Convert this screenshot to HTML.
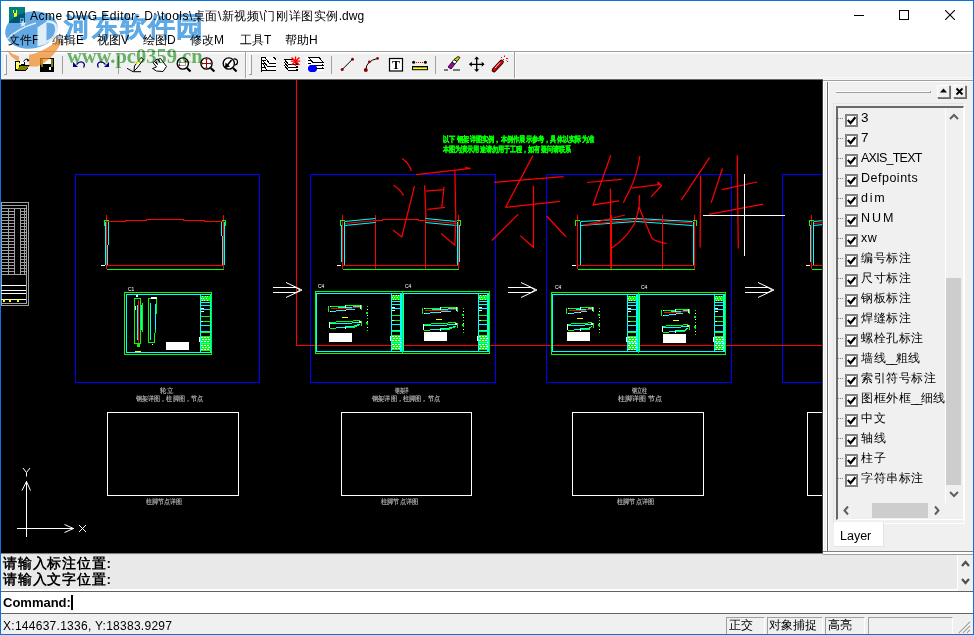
<!DOCTYPE html>
<html><head><meta charset="utf-8">
<style>
*{margin:0;padding:0;box-sizing:border-box}
html,body{width:974px;height:635px;overflow:hidden;background:#f0f0f0;font-family:"Liberation Sans",sans-serif;position:relative}
.a{position:absolute}
#title{left:0;top:0;width:974px;height:51px;background:#fff}
.t{font-size:12px;color:#000;white-space:nowrap;line-height:14px}
.dot{left:838px;width:5px;height:1px;background-image:linear-gradient(90deg,#808080 1px,transparent 1px);background-size:2px 1px}
.cb{left:845px;width:13px;height:13px;border:2px solid #808080;background:#fff}
.li{left:861px;font-size:12px;margin-top:-2px;letter-spacing:0.5px}
.lat{font-size:12.5px;letter-spacing:0}
.btn{width:13px;height:13px;background:#f0f0f0;border:1px solid #fff;border-right-color:#808080;border-bottom-color:#808080;box-shadow:1px 1px 0 #696969}
.cmdt{font-size:13.5px;font-weight:bold;line-height:16px;letter-spacing:0.8px;color:#000;white-space:nowrap}
.sp{top:617px;height:18px;border-top:1px solid #a0a0a0;border-left:1px solid #a0a0a0;border-right:1px solid #fff}
</style></head><body>
<div class="a" id="title"></div>
<!-- title -->
<svg class="a" style="left:9px;top:7px" width="16" height="16" viewBox="0 0 16 16">
<rect x="0" y="0" width="16" height="16" fill="#008080"/>
<path d="M3.4 3 H5.1 L5.3 6.3 H6.7 L6.9 3 H8.6 L7.9 6.3 V9.8 H4.6 V6.3 Z" fill="#ffff00" shape-rendering="crispEdges"/>
<rect x="11.5" y="11.5" width="3" height="3" fill="none" stroke="#fff" stroke-width="1"/>
</svg>
<div class="a t" style="left:30px;top:9px"><span style="letter-spacing:0.52px">Acme DWG Editor- D:\tools\</span><span style="letter-spacing:0.55px">桌面\新视频\门刚详图实例</span>.dwg</div>
<!-- caption buttons -->
<div class="a" style="left:854px;top:15px;width:10px;height:1px;background:#000"></div>
<div class="a" style="left:899px;top:10px;width:10px;height:10px;border:1px solid #000"></div>
<svg class="a" style="left:945px;top:10px" width="10" height="10" viewBox="0 0 10 10"><path d="M0 0 L10 10 M10 0 L0 10" stroke="#000" stroke-width="1.1"/></svg>
<!-- menu -->
<div class="a t" style="left:8px;top:33px">文件F</div>
<div class="a t" style="left:52px;top:33px">编辑E</div>
<div class="a t" style="left:97px;top:33px">视图V</div>
<div class="a t" style="left:143px;top:33px">绘图D</div>
<div class="a t" style="left:190px;top:33px">修改M</div>
<div class="a t" style="left:240px;top:33px">工具T</div>
<div class="a t" style="left:285px;top:33px">帮助H</div>
<!-- menu separator -->
<div class="a" style="left:0;top:51px;width:974px;height:1px;background:#a0a0a0"></div>
<div class="a" style="left:0;top:52px;width:974px;height:1px;background:#fff"></div>
<!-- toolbar bottom -->
<div class="a" style="left:1px;top:77px;width:972px;height:1px;background:#f8f8f8"></div>
<div class="a" style="left:1px;top:79px;width:822px;height:1px;background:#6a6a6a"></div>
<div class="a" style="left:823px;top:79px;width:150px;height:1px;background:#fafafa"></div>
<!-- toolbar -->
<svg class="a" style="left:0;top:52px" width="974" height="26" viewBox="0 52 974 26">
<g shape-rendering="crispEdges">
<rect x="1" y="53" width="972" height="1" fill="#fafafa"/>
<!-- grips -->
<rect x="4" y="55" width="1" height="20" fill="#fff"/><rect x="6" y="55" width="1" height="20" fill="#a0a0a0"/><rect x="4" y="74" width="3" height="1" fill="#a0a0a0"/>
<rect x="249" y="55" width="1" height="20" fill="#fff"/><rect x="251" y="55" width="1" height="20" fill="#a0a0a0"/><rect x="249" y="74" width="3" height="1" fill="#a0a0a0"/>
<!-- separators -->
<rect x="62" y="56" width="1" height="18" fill="#a0a0a0"/>
<rect x="118" y="56" width="1" height="18" fill="#a0a0a0"/>
<rect x="331" y="56" width="1" height="18" fill="#a0a0a0"/>
<rect x="435" y="56" width="1" height="18" fill="#a0a0a0"/>
<!-- toolbar ends -->
<rect x="245" y="52" width="1" height="26" fill="#a0a0a0"/><rect x="246" y="52" width="1" height="26" fill="#fff"/>
<rect x="514" y="52" width="1" height="26" fill="#a0a0a0"/><rect x="515" y="52" width="1" height="26" fill="#fff"/>
<!-- open folder -->
<path d="M15 61 H19 L20 62 H25 V65 H30 L26 71 H15 Z" fill="#000"/>
<rect x="16" y="62" width="3" height="7" fill="#ffff00"/>
<rect x="16" y="62" width="1" height="1" fill="#fff"/><rect x="18" y="62" width="1" height="1" fill="#fff"/><rect x="17" y="63" width="1" height="1" fill="#fff"/><rect x="16" y="64" width="1" height="1" fill="#fff"/><rect x="18" y="64" width="1" height="1" fill="#fff"/><rect x="17" y="65" width="1" height="1" fill="#fff"/><rect x="16" y="66" width="1" height="1" fill="#fff"/><rect x="16" y="68" width="1" height="1" fill="#fff"/>
<path d="M19 63 L23 64 L19 65 Z" fill="#ffff00"/>
<rect x="20" y="62" width="4" height="2" fill="#fff"/>
<path d="M16.5 70 L20 66 H29 L25.5 70 Z" fill="#808000"/>
<!-- save -->
<rect x="40" y="58" width="14" height="14" fill="#000"/>
<rect x="41" y="59" width="2" height="8" fill="#808000"/><rect x="51" y="59" width="2" height="8" fill="#808000"/>
<rect x="43" y="59" width="8" height="5" fill="#fff"/>
<rect x="49" y="67" width="2" height="3" fill="#fff"/>
</g>
<path d="M23.5 61.5 Q25.5 57.5 28.5 59.5" fill="none" stroke="#000" stroke-width="0.9"/><path d="M27.5 58.5 L29.5 61 L27 61.5 Z" fill="#000"/>
<!-- undo / redo -->
<path d="M76.5 64.5 Q80 60.5 83 62.5 Q85.5 64.5 83.5 67.5" fill="none" stroke="#000080" stroke-width="1.3"/>
<path d="M73 62 L73 67 L78 67 Z" fill="#000080"/>
<path d="M105.5 64.5 Q102 60.5 99 62.5 Q96.5 64.5 98.5 67.5" fill="none" stroke="#000080" stroke-width="1.3"/>
<path d="M109 62 L109 67 L104 67 Z" fill="#000080"/>
<!-- pen -->
<path d="M127 68.3 L133 71.7 L141 71.7" fill="none" stroke="#000" stroke-width="1"/>
<path d="M134 71 L134.5 66 L141 57.5 L143.5 59.5 L137 68 Z" fill="#fff" stroke="#000" stroke-width="1"/>
<path d="M136.5 64 L140.5 59" stroke="#ffff00" stroke-width="1.3"/>
<!-- hand -->
<path d="M152.5 68.5 Q155 67.5 156.5 67 L153 62.5 L154.5 61.5 L157.5 64.5 L155.5 60 L157.5 59 L160 62.5 L158.5 59 L160.5 58.5 L166.5 66.5 L163 71.5 L156.5 71 Z" fill="#fff" stroke="#000" stroke-width="1"/>
<!-- zoom window -->
<line x1="187" y1="68" x2="190.5" y2="71.5" stroke="#000" stroke-width="2.2"/>
<circle cx="182.8" cy="63.5" r="5.6" fill="#fff" stroke="#000" stroke-width="1.4"/>
<path d="M179.5 65.5 V62.5 H185.5 V65.5 Z" fill="none" stroke="#808080" stroke-width="0.8"/>
<circle cx="179.3" cy="65.3" r="1" fill="#c00000"/><circle cx="185.6" cy="61.2" r="1" fill="#c00000"/>
<!-- zoom center -->
<line x1="210.7" y1="68" x2="214.4" y2="71.5" stroke="#000" stroke-width="2.2"/>
<circle cx="206.5" cy="63.5" r="5.6" fill="#fff" stroke="#000" stroke-width="1.4"/>
<path d="M206.5 58.7 V68.3 M201.7 63.5 H211.3" stroke="#a00000" stroke-width="1"/>
<path d="M206.5 58.5 l-1.3 1.6h2.6z M206.5 68.5 l-1.3 -1.6h2.6z M201.5 63.5 l1.6 -1.3v2.6z M211.5 63.5 l-1.6 -1.3v2.6z" fill="#a00000"/>
<!-- zoom previous -->
<line x1="233" y1="68" x2="236.6" y2="71.5" stroke="#000" stroke-width="2.2"/>
<circle cx="228.8" cy="63.5" r="5.6" fill="#fff" stroke="#000" stroke-width="1.4"/>
<path d="M225.5 67.5 L231.5 60" stroke="#000" stroke-width="1.6"/>
<path d="M225 68 L225.5 62.5 L230 66.5 Z" fill="#000"/>
<path d="M233.5 59 Q237.5 58.5 237.5 62 Q237.5 64.5 235 65" fill="none" stroke="#000" stroke-width="1.2"/>
<!-- layers 1 -->
<g shape-rendering="crispEdges">
<path d="M262 57 H273 L276 60 V71 H262 Z" fill="#fff"/>
<path d="M305 57 H319 L324 62 V71 H308 Z" fill="#fff"/>
<path d="M284 59 H293 L298 64 V71 H288 L284 67 Z" fill="#fff"/>
</g>
<g fill="none" stroke="#000" stroke-width="1" shape-rendering="crispEdges">
<path d="M261.5 57 V72"/>
<path d="M262 57.5 H265 M262 60.5 H266 M262 63.5 H265 M262 67.5 H265"/>
<path d="M265 57.5 L269.5 63.5 H276 M263 60.5 L267.5 66.5 H276 M263 63.5 L267 70.5 M262 70.5 H276 M273.5 57 L276 59.5"/>
<!-- layers 2 -->
<path d="M284 59.5 H292.5 M284.5 59.5 L288.5 64.5 H298 M284.5 62.5 L288.5 67.5 H298 M284.5 65.5 L288.5 70.5 H298"/>
<path d="M296.5 63 L298 64.5 M296.5 66 L298 67.5 M296.5 69 L298 70.5"/>
<!-- layers 3 -->
<path d="M308 57.5 H319 L323.5 62.5 H313 L308.5 57.5 M308 60.5 H311 M308 63.5 H311 M313 65.5 H323.5 M317 68.5 H323.5 M322 61 L323.5 62.5 M322 64 L323.5 65.5 M322 67 L323.5 68.5"/>
</g>
<path d="M291.5 57.5 L299.5 65 M299.5 57.5 L291.5 65 M295.5 56.5 V66 M290.8 61.2 H300.2" stroke="#ff0000" stroke-width="1.3"/>
<path d="M310 65 H315 L317 67 V70 L315 72 H310 L308 70 V67 Z" fill="#0000ff"/>
<!-- line -->
<line x1="342.2" y1="69.5" x2="352.5" y2="59.2" stroke="#000" stroke-width="1"/>
<circle cx="342.2" cy="69.5" r="1.5" fill="#8b0000"/><circle cx="352.5" cy="59.2" r="1.5" fill="#8b0000"/>
<!-- arc -->
<path d="M365.8 70 Q366 61 377.6 58.4" fill="none" stroke="#000" stroke-width="1"/>
<circle cx="365.8" cy="70" r="2" fill="#8b0000"/><circle cx="369.4" cy="61.8" r="1.4" fill="#8b0000"/><circle cx="377.6" cy="58.4" r="1.3" fill="#8b0000"/>
<!-- T -->
<rect x="389.5" y="58.5" width="13" height="12.5" fill="#fff" stroke="#000" stroke-width="1.2"/>
<text x="396" y="69" text-anchor="middle" font-family="Liberation Serif" font-weight="bold" font-size="12" fill="#000">T</text>
<!-- dim -->
<circle cx="413.6" cy="62.3" r="1.5" fill="#000"/><circle cx="425.4" cy="62.3" r="1.5" fill="#000"/>
<path d="M416 62.5 H424" stroke="#d00000" stroke-width="1" stroke-dasharray="1 1" shape-rendering="crispEdges"/>
<rect x="412.5" y="66.5" width="15" height="3.2" fill="#ffff00" stroke="#000" stroke-width="1"/><path d="M414 67 V68 M416 67 V67.8 M418 67 V68 M420 67 V67.8 M422 67 V68 M424 67 V67.8 M426 67 V68" stroke="#000" stroke-width="0.8"/>
<!-- eraser -->
<path d="M444 70 H448 M453 70 H460" stroke="#000" stroke-width="1.2"/>
<path d="M448 67 L451 69 L455 64 L452 62 Z" fill="#a000a0" stroke="#000" stroke-width="0.8"/>
<path d="M452 62 L455 64 L457 61.5 L454 59.5 Z" fill="#fff" stroke="#000" stroke-width="0.8"/>
<path d="M454 59.5 L457 61.5 L460 57.5 L458 56.5 Z" fill="#c8c800" stroke="#000" stroke-width="0.8"/>
<!-- move -->
<path d="M476.7 57.5 V71 M469.5 64.3 H484" stroke="#000" stroke-width="1.3"/>
<path d="M476.7 56.5 l-2.5 2.8h5z M476.7 72 l-2.5 -2.8h5z M469 64.3 l2.8 -2.5v5z M484.5 64.3 l-2.8 -2.5v5z" fill="#000"/>
<!-- explode -->
<path d="M494 70 L501.5 62" stroke="#000" stroke-width="4.6" stroke-linecap="round"/>
<path d="M494 70 L501.5 62" stroke="#e00000" stroke-width="3" stroke-linecap="round"/>
<path d="M495 68 L500 62.5" stroke="#fff" stroke-width="0.8"/>
<path d="M502 61 L504 59 M504.5 57 V55.5 M506 58.5 H508 M506.5 60.5 L508 62 M501 57 L502 58" stroke="#c00000" stroke-width="0.9"/>
</svg>
<!-- canvas -->
<div class="a" style="left:1px;top:80px;width:822px;height:473px;background:#000"></div>
<svg class="a" style="left:1px;top:80px" width="822" height="473" viewBox="1 80 822 473">
<g shape-rendering="crispEdges">
<rect x="1.5" y="202.5" width="27.0" height="103.0" fill="none" stroke="#a0a0a0" stroke-width="1"/>
<rect x="1.5" y="205.5" width="25.0" height="98.0" fill="none" stroke="#a0a0a0" stroke-width="1"/>
<line x1="1" y1="208.5" x2="26" y2="208.5" stroke="#a0a0a0" stroke-width="1"/>
<line x1="1" y1="211.5" x2="15" y2="211.5" stroke="#a0a0a0" stroke-width="1"/>
<line x1="21" y1="211.5" x2="26" y2="211.5" stroke="#a0a0a0" stroke-width="1"/>
<line x1="1" y1="214.5" x2="15" y2="214.5" stroke="#a0a0a0" stroke-width="1"/>
<line x1="21" y1="214.5" x2="26" y2="214.5" stroke="#a0a0a0" stroke-width="1"/>
<line x1="1" y1="217.5" x2="15" y2="217.5" stroke="#a0a0a0" stroke-width="1"/>
<line x1="21" y1="217.5" x2="26" y2="217.5" stroke="#a0a0a0" stroke-width="1"/>
<line x1="1" y1="220.5" x2="15" y2="220.5" stroke="#a0a0a0" stroke-width="1"/>
<line x1="21" y1="220.5" x2="26" y2="220.5" stroke="#a0a0a0" stroke-width="1"/>
<line x1="1" y1="223.5" x2="15" y2="223.5" stroke="#a0a0a0" stroke-width="1"/>
<line x1="21" y1="223.5" x2="26" y2="223.5" stroke="#a0a0a0" stroke-width="1"/>
<line x1="1" y1="226.5" x2="15" y2="226.5" stroke="#a0a0a0" stroke-width="1"/>
<line x1="21" y1="226.5" x2="26" y2="226.5" stroke="#a0a0a0" stroke-width="1"/>
<line x1="1" y1="229.5" x2="15" y2="229.5" stroke="#a0a0a0" stroke-width="1"/>
<line x1="21" y1="229.5" x2="26" y2="229.5" stroke="#a0a0a0" stroke-width="1"/>
<line x1="1" y1="232.5" x2="15" y2="232.5" stroke="#a0a0a0" stroke-width="1"/>
<line x1="21" y1="232.5" x2="26" y2="232.5" stroke="#a0a0a0" stroke-width="1"/>
<line x1="1" y1="235.5" x2="15" y2="235.5" stroke="#a0a0a0" stroke-width="1"/>
<line x1="21" y1="235.5" x2="26" y2="235.5" stroke="#a0a0a0" stroke-width="1"/>
<line x1="1" y1="238.5" x2="15" y2="238.5" stroke="#a0a0a0" stroke-width="1"/>
<line x1="21" y1="238.5" x2="26" y2="238.5" stroke="#a0a0a0" stroke-width="1"/>
<line x1="1" y1="241.5" x2="15" y2="241.5" stroke="#a0a0a0" stroke-width="1"/>
<line x1="21" y1="241.5" x2="26" y2="241.5" stroke="#a0a0a0" stroke-width="1"/>
<line x1="1" y1="244.5" x2="15" y2="244.5" stroke="#a0a0a0" stroke-width="1"/>
<line x1="21" y1="244.5" x2="26" y2="244.5" stroke="#a0a0a0" stroke-width="1"/>
<line x1="1" y1="247.5" x2="15" y2="247.5" stroke="#a0a0a0" stroke-width="1"/>
<line x1="21" y1="247.5" x2="26" y2="247.5" stroke="#a0a0a0" stroke-width="1"/>
<line x1="1" y1="250.5" x2="15" y2="250.5" stroke="#a0a0a0" stroke-width="1"/>
<line x1="21" y1="250.5" x2="26" y2="250.5" stroke="#a0a0a0" stroke-width="1"/>
<line x1="1" y1="253.5" x2="15" y2="253.5" stroke="#a0a0a0" stroke-width="1"/>
<line x1="21" y1="253.5" x2="26" y2="253.5" stroke="#a0a0a0" stroke-width="1"/>
<line x1="1" y1="256.5" x2="15" y2="256.5" stroke="#a0a0a0" stroke-width="1"/>
<line x1="21" y1="256.5" x2="26" y2="256.5" stroke="#a0a0a0" stroke-width="1"/>
<line x1="1" y1="259.5" x2="15" y2="259.5" stroke="#a0a0a0" stroke-width="1"/>
<line x1="21" y1="259.5" x2="26" y2="259.5" stroke="#a0a0a0" stroke-width="1"/>
<line x1="1" y1="262.5" x2="15" y2="262.5" stroke="#a0a0a0" stroke-width="1"/>
<line x1="21" y1="262.5" x2="26" y2="262.5" stroke="#a0a0a0" stroke-width="1"/>
<line x1="1" y1="265.5" x2="15" y2="265.5" stroke="#a0a0a0" stroke-width="1"/>
<line x1="21" y1="265.5" x2="26" y2="265.5" stroke="#a0a0a0" stroke-width="1"/>
<line x1="1" y1="268.5" x2="15" y2="268.5" stroke="#a0a0a0" stroke-width="1"/>
<line x1="21" y1="268.5" x2="26" y2="268.5" stroke="#a0a0a0" stroke-width="1"/>
<line x1="1" y1="271.5" x2="15" y2="271.5" stroke="#a0a0a0" stroke-width="1"/>
<line x1="21" y1="271.5" x2="26" y2="271.5" stroke="#a0a0a0" stroke-width="1"/>
<line x1="1" y1="274.5" x2="15" y2="274.5" stroke="#a0a0a0" stroke-width="1"/>
<line x1="21" y1="274.5" x2="26" y2="274.5" stroke="#a0a0a0" stroke-width="1"/>
<line x1="8.5" y1="208" x2="8.5" y2="274" stroke="#a0a0a0" stroke-width="1"/>
<line x1="14.5" y1="208" x2="14.5" y2="274" stroke="#a0a0a0" stroke-width="1"/>
<line x1="20.5" y1="208" x2="20.5" y2="274" stroke="#a0a0a0" stroke-width="1"/>
<line x1="24.5" y1="208" x2="24.5" y2="274" stroke="#a0a0a0" stroke-width="1"/>
<line x1="1" y1="274.5" x2="26" y2="274.5" stroke="#a0a0a0" stroke-width="1"/>
<line x1="1" y1="285.5" x2="26" y2="285.5" stroke="#ffffff" stroke-width="1"/>
<line x1="1" y1="290.5" x2="26" y2="290.5" stroke="#ffffff" stroke-width="1"/>
<line x1="1" y1="293.5" x2="26" y2="293.5" stroke="#ffffff" stroke-width="1"/>
<line x1="1" y1="299.5" x2="26" y2="299.5" stroke="#ffffff" stroke-width="1"/>
<rect x="3" y="299" width="2" height="3" fill="#ffff00"/>
<rect x="9" y="299" width="2" height="3" fill="#ffff00"/>
<rect x="17" y="299" width="2" height="3" fill="#ffff00"/>
<rect x="75.5" y="174.5" width="184.0" height="208.0" fill="none" stroke="#0000ff" stroke-width="1"/>
<rect x="310.5" y="174.5" width="185.0" height="208.0" fill="none" stroke="#0000ff" stroke-width="1"/>
<rect x="546.5" y="174.5" width="185.0" height="208.0" fill="none" stroke="#0000ff" stroke-width="1"/>
<rect x="782.5" y="174.5" width="47.5" height="208.0" fill="none" stroke="#0000ff" stroke-width="1"/>
<rect x="107.5" y="412.5" width="131.0" height="83.0" fill="none" stroke="#ffffff" stroke-width="1"/>
<rect x="341.5" y="412.5" width="130.0" height="83.0" fill="none" stroke="#ffffff" stroke-width="1"/>
<rect x="572.5" y="412.5" width="131.0" height="83.0" fill="none" stroke="#ffffff" stroke-width="1"/>
<rect x="807.5" y="412.5" width="22.5" height="83.0" fill="none" stroke="#ffffff" stroke-width="1"/>
<line x1="106.5" y1="215" x2="106.5" y2="269" stroke="#ff0000" stroke-width="1"/>
<line x1="223.5" y1="215" x2="223.5" y2="269" stroke="#ff0000" stroke-width="1"/>
<line x1="106.5" y1="265.5" x2="223.5" y2="265.5" stroke="#ff0000" stroke-width="1"/>
<line x1="106.5" y1="269.5" x2="223.5" y2="269.5" stroke="#00ff00" stroke-width="1"/>
<line x1="100.5" y1="265.5" x2="104.5" y2="265.5" stroke="#ffffff" stroke-width="1"/>
<path d="M104.5 226 V220 H108.5" fill="none" stroke="#00ff00" stroke-width="1"/>
<path d="M225.5 226 V220 H221.5" fill="none" stroke="#00ff00" stroke-width="1"/>
<path d="M106.5 221.5 H125.5 V220.5 H146.5 V219.5 H183.5 V220.5 H204.5 V221.5 H223.5" fill="none" stroke="#ff0000" stroke-width="1"/>
<line x1="105.5" y1="222" x2="105.5" y2="265" stroke="#00ffff" stroke-width="1"/>
<line x1="108.5" y1="222" x2="108.5" y2="245" stroke="#00ffff" stroke-width="1"/>
<line x1="107.5" y1="245" x2="107.5" y2="265" stroke="#00ffff" stroke-width="1"/>
<line x1="224.5" y1="222" x2="224.5" y2="265" stroke="#00ffff" stroke-width="1"/>
<line x1="221.5" y1="222" x2="221.5" y2="236" stroke="#00ffff" stroke-width="1"/>
<line x1="222.5" y1="236" x2="222.5" y2="265" stroke="#00ffff" stroke-width="1"/>
<line x1="342.5" y1="215" x2="342.5" y2="269" stroke="#ff0000" stroke-width="1"/>
<line x1="458.5" y1="215" x2="458.5" y2="269" stroke="#ff0000" stroke-width="1"/>
<line x1="342.5" y1="265.5" x2="458.5" y2="265.5" stroke="#ff0000" stroke-width="1"/>
<line x1="342.5" y1="269.5" x2="458.5" y2="269.5" stroke="#00ff00" stroke-width="1"/>
<line x1="336.5" y1="265.5" x2="340.5" y2="265.5" stroke="#ffffff" stroke-width="1"/>
<path d="M340.5 226 V220 H344.5" fill="none" stroke="#00ff00" stroke-width="1"/>
<path d="M460.5 226 V220 H456.5" fill="none" stroke="#00ff00" stroke-width="1"/>
<line x1="375.5" y1="215" x2="375.5" y2="269" stroke="#ff0000" stroke-width="1"/>
<line x1="425.5" y1="215" x2="425.5" y2="269" stroke="#ff0000" stroke-width="1"/>
<path d="M375.5 220.5 H382.5 V219.5 H418.5 V220.5 H425.5" fill="none" stroke="#ff0000" stroke-width="1"/>
</g>
<path d="M344.5 221.5 L375.5 218.5" fill="none" stroke="#00ffff" stroke-width="1"/>
<path d="M344.5 225.5 L375.5 222.5" fill="none" stroke="#00ffff" stroke-width="1"/>
<path d="M344.5 223.5 L375.5 220.5" fill="none" stroke="#ff0000" stroke-width="1"/>
<path d="M456.5 221.5 L425.5 218.5" fill="none" stroke="#00ffff" stroke-width="1"/>
<path d="M456.5 225.5 L425.5 222.5" fill="none" stroke="#00ffff" stroke-width="1"/>
<path d="M456.5 223.5 L425.5 220.5" fill="none" stroke="#ff0000" stroke-width="1"/>
<g shape-rendering="crispEdges">
<line x1="344.0" y1="222" x2="344.0" y2="265" stroke="#00ffff" stroke-width="1"/>
<line x1="341.5" y1="225" x2="341.5" y2="262" stroke="#00ffff" stroke-width="1"/>
<line x1="457.0" y1="222" x2="457.0" y2="265" stroke="#00ffff" stroke-width="1"/>
<line x1="459.5" y1="225" x2="459.5" y2="262" stroke="#00ffff" stroke-width="1"/>
<line x1="577.5" y1="215" x2="577.5" y2="269" stroke="#ff0000" stroke-width="1"/>
<line x1="694.5" y1="215" x2="694.5" y2="269" stroke="#ff0000" stroke-width="1"/>
<line x1="577.5" y1="265.5" x2="694.5" y2="265.5" stroke="#ff0000" stroke-width="1"/>
<line x1="577.5" y1="269.5" x2="694.5" y2="269.5" stroke="#00ff00" stroke-width="1"/>
<line x1="571.5" y1="265.5" x2="575.5" y2="265.5" stroke="#ffffff" stroke-width="1"/>
<path d="M575.5 226 V220 H579.5" fill="none" stroke="#00ff00" stroke-width="1"/>
<path d="M696.5 226 V220 H692.5" fill="none" stroke="#00ff00" stroke-width="1"/>
</g>
<path d="M580.5 221.5 L636.0 218.5 L692.5 221.5" fill="none" stroke="#00ffff" stroke-width="1"/>
<path d="M580.5 225.5 L636.0 221.5 L692.5 225.5" fill="none" stroke="#00ffff" stroke-width="1"/>
<path d="M583.5 225 L636.0 219.5 L692.5 223" fill="none" stroke="#ff0000" stroke-width="1"/>
<g shape-rendering="crispEdges">
<line x1="611.5" y1="215" x2="611.5" y2="269" stroke="#ff0000" stroke-width="1"/>
<line x1="662.0" y1="215" x2="662.0" y2="269" stroke="#ff0000" stroke-width="1"/>
<line x1="580.0" y1="222" x2="580.0" y2="265" stroke="#00ffff" stroke-width="1"/>
<line x1="693.0" y1="222" x2="693.0" y2="265" stroke="#00ffff" stroke-width="1"/>
<line x1="811.5" y1="215" x2="811.5" y2="269" stroke="#ff0000" stroke-width="1"/>
<line x1="928.5" y1="215" x2="928.5" y2="269" stroke="#ff0000" stroke-width="1"/>
<line x1="811.5" y1="265.5" x2="928.5" y2="265.5" stroke="#ff0000" stroke-width="1"/>
<line x1="811.5" y1="269.5" x2="928.5" y2="269.5" stroke="#00ff00" stroke-width="1"/>
<line x1="805.5" y1="265.5" x2="809.5" y2="265.5" stroke="#ffffff" stroke-width="1"/>
<path d="M809.5 226 V220 H813.5" fill="none" stroke="#00ff00" stroke-width="1"/>
<path d="M930.5 226 V220 H926.5" fill="none" stroke="#00ff00" stroke-width="1"/>
<line x1="844.5" y1="215" x2="844.5" y2="269" stroke="#ff0000" stroke-width="1"/>
<line x1="895.5" y1="215" x2="895.5" y2="269" stroke="#ff0000" stroke-width="1"/>
<path d="M844.5 220.5 H851.5 V219.5 H888.5 V220.5 H895.5" fill="none" stroke="#ff0000" stroke-width="1"/>
</g>
<path d="M813.5 221.5 L844.5 218.5" fill="none" stroke="#00ffff" stroke-width="1"/>
<path d="M813.5 225.5 L844.5 222.5" fill="none" stroke="#00ffff" stroke-width="1"/>
<path d="M813.5 223.5 L844.5 220.5" fill="none" stroke="#ff0000" stroke-width="1"/>
<path d="M926.5 221.5 L895.5 218.5" fill="none" stroke="#00ffff" stroke-width="1"/>
<path d="M926.5 225.5 L895.5 222.5" fill="none" stroke="#00ffff" stroke-width="1"/>
<path d="M926.5 223.5 L895.5 220.5" fill="none" stroke="#ff0000" stroke-width="1"/>
<g shape-rendering="crispEdges">
<line x1="813.0" y1="222" x2="813.0" y2="265" stroke="#00ffff" stroke-width="1"/>
<line x1="810.5" y1="225" x2="810.5" y2="262" stroke="#00ffff" stroke-width="1"/>
<line x1="927.0" y1="222" x2="927.0" y2="265" stroke="#00ffff" stroke-width="1"/>
<line x1="929.5" y1="225" x2="929.5" y2="262" stroke="#00ffff" stroke-width="1"/>
</g>
<g shape-rendering="crispEdges">
<line x1="296.5" y1="80" x2="296.5" y2="345.5" stroke="#ff0000" stroke-width="1"/>
<line x1="296" y1="345.5" x2="823" y2="345.5" stroke="#ff0000" stroke-width="1"/>
</g>
<g shape-rendering="crispEdges">
<rect x="124.5" y="292.5" width="87.0" height="62.0" fill="none" stroke="#00ff00" stroke-width="1"/>
<rect x="126.5" y="294.5" width="84.0" height="58.0" fill="none" stroke="#00ffff" stroke-width="1"/>
<rect x="166" y="342" width="23" height="8" fill="#ffffff"/>
<rect x="135" y="351" width="6" height="1" fill="#ffff00"/>
<line x1="200.5" y1="295" x2="200.5" y2="352" stroke="#00ffff" stroke-width="1"/>
<rect x="134.5" y="298.5" width="6.0" height="45.0" fill="none" stroke="#00ff00" stroke-width="1"/>
<line x1="138.5" y1="300" x2="138.5" y2="343" stroke="#ff0000" stroke-width="1"/>
<line x1="137.5" y1="305" x2="137.5" y2="340" stroke="#00ffff" stroke-width="1"/>
<line x1="141.5" y1="305" x2="141.5" y2="330" stroke="#00ffff" stroke-width="1"/>
<line x1="142.5" y1="303" x2="142.5" y2="332" stroke="#00ff00" stroke-width="1"/>
<rect x="136" y="295" width="2" height="2" fill="#ffffff"/>
<rect x="137" y="343" width="3" height="4" fill="#00ff00"/>
<rect x="135" y="306" width="1" height="4" fill="#ffffff"/>
<path d="M148.5 342.5 V298.5 H156.5 V304 L154.5 342.5 Z" fill="none" stroke="#00ff00" stroke-width="1"/>
<line x1="150.5" y1="303" x2="150.5" y2="340" stroke="#00ffff" stroke-width="1"/>
<line x1="155.5" y1="304" x2="155.5" y2="330" stroke="#00ffff" stroke-width="1"/>
<rect x="151" y="297" width="6" height="2" fill="#ffffff"/>
<rect x="152" y="344" width="1" height="1" fill="#ffffff"/>
</g>
<g shape-rendering="crispEdges">
<line x1="200.5" y1="295" x2="200.5" y2="352" stroke="#00ffff" stroke-width="1"/>
<line x1="210.5" y1="295" x2="210.5" y2="352" stroke="#00ffff" stroke-width="1"/>
<rect x="201" y="296" width="9" height="5" fill="#00ff00"/>
<rect x="202" y="296" width="1" height="1" fill="#ffffff"/>
<rect x="205" y="296" width="1" height="1" fill="#ffffff"/>
<rect x="207" y="296" width="1" height="1" fill="#ffffff"/>
<rect x="201" y="298" width="1" height="1" fill="#ffffff"/>
<rect x="203" y="298" width="1" height="1" fill="#ffffff"/>
<rect x="206" y="298" width="1" height="1" fill="#ffffff"/>
<rect x="202" y="300" width="1" height="1" fill="#ffffff"/>
<rect x="204" y="300" width="1" height="1" fill="#ffffff"/>
<rect x="207" y="300" width="1" height="1" fill="#ffffff"/>
<line x1="200" y1="302.5" x2="210" y2="302.5" stroke="#00ffff" stroke-width="1"/>
<line x1="200" y1="305.5" x2="210" y2="305.5" stroke="#00ffff" stroke-width="1"/>
<line x1="200" y1="309.5" x2="210" y2="309.5" stroke="#00ffff" stroke-width="1"/>
<line x1="200" y1="316.5" x2="210" y2="316.5" stroke="#00ffff" stroke-width="1"/>
<line x1="200" y1="321.5" x2="210" y2="321.5" stroke="#00ffff" stroke-width="1"/>
<line x1="200" y1="325.5" x2="210" y2="325.5" stroke="#00ffff" stroke-width="1"/>
<line x1="200" y1="331.5" x2="210" y2="331.5" stroke="#00ffff" stroke-width="1"/>
<line x1="201" y1="316.5" x2="210" y2="316.5" stroke="#00ff00" stroke-width="1"/>
<line x1="201" y1="321.5" x2="210" y2="321.5" stroke="#00ff00" stroke-width="1"/>
<line x1="201" y1="332.5" x2="210" y2="332.5" stroke="#00ff00" stroke-width="1"/>
<rect x="201" y="308" width="3" height="1" fill="#ffffff"/>
<rect x="201" y="311" width="3" height="1" fill="#ffffff"/>
<rect x="201" y="321" width="2" height="1" fill="#ffffff"/>
<rect x="201" y="336" width="9" height="15" fill="#00ff00"/>
<rect x="201" y="337" width="2" height="1" fill="#ffffff"/>
<rect x="204" y="337" width="2" height="1" fill="#ffffff"/>
<rect x="207" y="337" width="2" height="1" fill="#ffffff"/>
<rect x="202" y="339" width="2" height="1" fill="#ffffff"/>
<rect x="205" y="339" width="2" height="1" fill="#ffffff"/>
<rect x="208" y="339" width="2" height="1" fill="#ffffff"/>
<rect x="201" y="341" width="2" height="1" fill="#ffffff"/>
<rect x="204" y="341" width="2" height="1" fill="#ffffff"/>
<rect x="207" y="341" width="2" height="1" fill="#ffffff"/>
<rect x="202" y="343" width="2" height="1" fill="#ffffff"/>
<rect x="205" y="343" width="2" height="1" fill="#ffffff"/>
<rect x="208" y="343" width="2" height="1" fill="#ffffff"/>
<rect x="201" y="345" width="2" height="1" fill="#ffffff"/>
<rect x="204" y="345" width="2" height="1" fill="#ffffff"/>
<rect x="207" y="345" width="2" height="1" fill="#ffffff"/>
<rect x="202" y="347" width="2" height="1" fill="#ffffff"/>
<rect x="205" y="347" width="2" height="1" fill="#ffffff"/>
<rect x="208" y="347" width="2" height="1" fill="#ffffff"/>
<rect x="201" y="349" width="2" height="1" fill="#ffffff"/>
<rect x="204" y="349" width="2" height="1" fill="#ffffff"/>
<rect x="207" y="349" width="2" height="1" fill="#ffffff"/>
<rect x="199" y="337" width="2" height="5" fill="#ffffff"/>
<line x1="200.5" y1="336" x2="200.5" y2="352" stroke="#00ffff" stroke-width="1"/>
<line x1="201" y1="343.5" x2="210" y2="343.5" stroke="#00ffff" stroke-width="1"/>
</g>
<text x="128" y="291" fill="#fff" font-size="5" font-family="Liberation Sans">C1</text>
<g shape-rendering="crispEdges">
<rect x="315.5" y="291.5" width="174.0" height="62.0" fill="none" stroke="#00ff00" stroke-width="1"/>
<line x1="402.5" y1="292" x2="402.5" y2="353" stroke="#00ff00" stroke-width="1"/>
</g>
<g shape-rendering="crispEdges">
<rect x="316.5" y="293.5" width="85.0" height="58.0" fill="none" stroke="#00ffff" stroke-width="1"/>
</g>
<g shape-rendering="crispEdges">
<line x1="391.5" y1="294" x2="391.5" y2="351" stroke="#00ffff" stroke-width="1"/>
<line x1="400.5" y1="294" x2="400.5" y2="351" stroke="#00ffff" stroke-width="1"/>
<rect x="392" y="295" width="8" height="5" fill="#00ff00"/>
<rect x="393" y="295" width="1" height="1" fill="#ffffff"/>
<rect x="396" y="295" width="1" height="1" fill="#ffffff"/>
<rect x="398" y="295" width="1" height="1" fill="#ffffff"/>
<rect x="392" y="297" width="1" height="1" fill="#ffffff"/>
<rect x="394" y="297" width="1" height="1" fill="#ffffff"/>
<rect x="397" y="297" width="1" height="1" fill="#ffffff"/>
<rect x="393" y="299" width="1" height="1" fill="#ffffff"/>
<rect x="395" y="299" width="1" height="1" fill="#ffffff"/>
<rect x="398" y="299" width="1" height="1" fill="#ffffff"/>
<line x1="391" y1="301.5" x2="400" y2="301.5" stroke="#00ffff" stroke-width="1"/>
<line x1="391" y1="304.5" x2="400" y2="304.5" stroke="#00ffff" stroke-width="1"/>
<line x1="391" y1="308.5" x2="400" y2="308.5" stroke="#00ffff" stroke-width="1"/>
<line x1="391" y1="315.5" x2="400" y2="315.5" stroke="#00ffff" stroke-width="1"/>
<line x1="391" y1="320.5" x2="400" y2="320.5" stroke="#00ffff" stroke-width="1"/>
<line x1="391" y1="324.5" x2="400" y2="324.5" stroke="#00ffff" stroke-width="1"/>
<line x1="391" y1="330.5" x2="400" y2="330.5" stroke="#00ffff" stroke-width="1"/>
<line x1="392" y1="315.5" x2="400" y2="315.5" stroke="#00ff00" stroke-width="1"/>
<line x1="392" y1="320.5" x2="400" y2="320.5" stroke="#00ff00" stroke-width="1"/>
<line x1="392" y1="331.5" x2="400" y2="331.5" stroke="#00ff00" stroke-width="1"/>
<rect x="392" y="307" width="3" height="1" fill="#ffffff"/>
<rect x="392" y="310" width="3" height="1" fill="#ffffff"/>
<rect x="392" y="320" width="2" height="1" fill="#ffffff"/>
<rect x="392" y="335" width="8" height="15" fill="#00ff00"/>
<rect x="392" y="336" width="2" height="1" fill="#ffffff"/>
<rect x="395" y="336" width="2" height="1" fill="#ffffff"/>
<rect x="398" y="336" width="2" height="1" fill="#ffffff"/>
<rect x="393" y="338" width="2" height="1" fill="#ffffff"/>
<rect x="396" y="338" width="2" height="1" fill="#ffffff"/>
<rect x="399" y="338" width="2" height="1" fill="#ffffff"/>
<rect x="392" y="340" width="2" height="1" fill="#ffffff"/>
<rect x="395" y="340" width="2" height="1" fill="#ffffff"/>
<rect x="398" y="340" width="2" height="1" fill="#ffffff"/>
<rect x="393" y="342" width="2" height="1" fill="#ffffff"/>
<rect x="396" y="342" width="2" height="1" fill="#ffffff"/>
<rect x="399" y="342" width="2" height="1" fill="#ffffff"/>
<rect x="392" y="344" width="2" height="1" fill="#ffffff"/>
<rect x="395" y="344" width="2" height="1" fill="#ffffff"/>
<rect x="398" y="344" width="2" height="1" fill="#ffffff"/>
<rect x="393" y="346" width="2" height="1" fill="#ffffff"/>
<rect x="396" y="346" width="2" height="1" fill="#ffffff"/>
<rect x="399" y="346" width="2" height="1" fill="#ffffff"/>
<rect x="392" y="348" width="2" height="1" fill="#ffffff"/>
<rect x="395" y="348" width="2" height="1" fill="#ffffff"/>
<rect x="398" y="348" width="2" height="1" fill="#ffffff"/>
<rect x="390" y="336" width="2" height="5" fill="#ffffff"/>
<line x1="391.5" y1="335" x2="391.5" y2="351" stroke="#00ffff" stroke-width="1"/>
<line x1="392" y1="342.5" x2="400" y2="342.5" stroke="#00ffff" stroke-width="1"/>
</g>
<g shape-rendering="crispEdges">
<line x1="330" y1="306.5" x2="344.5" y2="306.5" stroke="#00ff00" stroke-width="1"/>
<line x1="344.5" y1="305.5" x2="361" y2="305.5" stroke="#00ff00" stroke-width="1"/>
<line x1="338" y1="307.5" x2="352.5" y2="307.5" stroke="#00ffff" stroke-width="1"/>
<line x1="352.5" y1="306.5" x2="360" y2="306.5" stroke="#00ffff" stroke-width="1"/>
<line x1="331" y1="308.5" x2="344.5" y2="308.5" stroke="#ff0000" stroke-width="1"/>
<line x1="344.5" y1="308.5" x2="360" y2="307.5" stroke="#ff0000" stroke-width="1"/>
<line x1="345.5" y1="309.5" x2="355" y2="309.5" stroke="#00ffff" stroke-width="1"/>
<line x1="336" y1="310.5" x2="344.5" y2="310.5" stroke="#00ffff" stroke-width="1"/>
<line x1="331" y1="311.5" x2="336" y2="311.5" stroke="#00ffff" stroke-width="1"/>
<line x1="328.5" y1="306" x2="328.5" y2="312" stroke="#00ff00" stroke-width="1"/>
<line x1="361.5" y1="305" x2="361.5" y2="310" stroke="#00ff00" stroke-width="1"/>
<rect x="330" y="306" width="1" height="1" fill="#ffffff"/>
<rect x="344.5" y="305" width="1.0" height="3" fill="#ffffff"/>
<rect x="360" y="305" width="1" height="4" fill="#ffffff"/>
<rect x="330" y="311" width="1" height="1" fill="#ffffff"/>
<rect x="344.5" y="310" width="1.0" height="1" fill="#ffffff"/>
</g>
<g shape-rendering="crispEdges">
<line x1="335.5" y1="321.5" x2="352.5" y2="321.5" stroke="#00ff00" stroke-width="1"/>
<line x1="352.5" y1="320.5" x2="360" y2="320.5" stroke="#00ff00" stroke-width="1"/>
<line x1="330" y1="322.5" x2="335.5" y2="322.5" stroke="#00ff00" stroke-width="1"/>
<line x1="330" y1="323.5" x2="344.5" y2="323.5" stroke="#00ffff" stroke-width="1"/>
<line x1="344.5" y1="323.5" x2="359" y2="322.5" stroke="#00ffff" stroke-width="1"/>
<line x1="354.5" y1="325.5" x2="360" y2="324.5" stroke="#00ffff" stroke-width="1"/>
<line x1="344.5" y1="326.5" x2="354.5" y2="326.5" stroke="#00ffff" stroke-width="1"/>
<line x1="336" y1="327.5" x2="344.5" y2="327.5" stroke="#00ffff" stroke-width="1"/>
<line x1="354.5" y1="326.5" x2="359" y2="325.5" stroke="#00ff00" stroke-width="1"/>
<line x1="344.5" y1="327.5" x2="354.5" y2="327.5" stroke="#00ff00" stroke-width="1"/>
<line x1="330" y1="328.5" x2="336" y2="328.5" stroke="#00ff00" stroke-width="1"/>
<line x1="329.5" y1="322" x2="329.5" y2="328" stroke="#ffffff" stroke-width="1"/>
<line x1="361.5" y1="321" x2="361.5" y2="326" stroke="#00ff00" stroke-width="1"/>
<rect x="359" y="321" width="2" height="2" fill="#ffffff"/>
<rect x="344.5" y="327" width="1.0" height="2" fill="#ffffff"/>
</g>
<g shape-rendering="crispEdges">
<rect x="342" y="317" width="6" height="1" fill="#ffff00"/>
<rect x="329" y="333" width="23" height="9" fill="#ffffff"/>
<rect x="367" y="306" width="1" height="1" fill="#00ff00"/>
<rect x="367" y="309" width="1" height="1" fill="#ffffff"/>
<rect x="367" y="312" width="1" height="1" fill="#00ff00"/>
<rect x="367" y="315" width="1" height="1" fill="#ffffff"/>
<rect x="367" y="318" width="1" height="1" fill="#00ff00"/>
<rect x="367" y="321" width="1" height="1" fill="#ffffff"/>
<rect x="367" y="324" width="1" height="1" fill="#00ff00"/>
<rect x="367" y="327" width="1" height="1" fill="#ffffff"/>
<rect x="367" y="330" width="1" height="1" fill="#00ff00"/>
<rect x="366" y="312" width="2" height="2" fill="#00ff00"/>
<rect x="366" y="322" width="2" height="2" fill="#00ff00"/>
</g>
<g shape-rendering="crispEdges">
<rect x="403.5" y="293.5" width="85.0" height="58.0" fill="none" stroke="#00ffff" stroke-width="1"/>
</g>
<g shape-rendering="crispEdges">
<line x1="478.5" y1="294" x2="478.5" y2="351" stroke="#00ffff" stroke-width="1"/>
<line x1="487.5" y1="294" x2="487.5" y2="351" stroke="#00ffff" stroke-width="1"/>
<rect x="479" y="295" width="8" height="5" fill="#00ff00"/>
<rect x="480" y="295" width="1" height="1" fill="#ffffff"/>
<rect x="483" y="295" width="1" height="1" fill="#ffffff"/>
<rect x="485" y="295" width="1" height="1" fill="#ffffff"/>
<rect x="479" y="297" width="1" height="1" fill="#ffffff"/>
<rect x="481" y="297" width="1" height="1" fill="#ffffff"/>
<rect x="484" y="297" width="1" height="1" fill="#ffffff"/>
<rect x="480" y="299" width="1" height="1" fill="#ffffff"/>
<rect x="482" y="299" width="1" height="1" fill="#ffffff"/>
<rect x="485" y="299" width="1" height="1" fill="#ffffff"/>
<line x1="478" y1="301.5" x2="487" y2="301.5" stroke="#00ffff" stroke-width="1"/>
<line x1="478" y1="304.5" x2="487" y2="304.5" stroke="#00ffff" stroke-width="1"/>
<line x1="478" y1="308.5" x2="487" y2="308.5" stroke="#00ffff" stroke-width="1"/>
<line x1="478" y1="315.5" x2="487" y2="315.5" stroke="#00ffff" stroke-width="1"/>
<line x1="478" y1="320.5" x2="487" y2="320.5" stroke="#00ffff" stroke-width="1"/>
<line x1="478" y1="324.5" x2="487" y2="324.5" stroke="#00ffff" stroke-width="1"/>
<line x1="478" y1="330.5" x2="487" y2="330.5" stroke="#00ffff" stroke-width="1"/>
<line x1="479" y1="315.5" x2="487" y2="315.5" stroke="#00ff00" stroke-width="1"/>
<line x1="479" y1="320.5" x2="487" y2="320.5" stroke="#00ff00" stroke-width="1"/>
<line x1="479" y1="331.5" x2="487" y2="331.5" stroke="#00ff00" stroke-width="1"/>
<rect x="479" y="307" width="3" height="1" fill="#ffffff"/>
<rect x="479" y="310" width="3" height="1" fill="#ffffff"/>
<rect x="479" y="320" width="2" height="1" fill="#ffffff"/>
<rect x="479" y="335" width="8" height="15" fill="#00ff00"/>
<rect x="479" y="336" width="2" height="1" fill="#ffffff"/>
<rect x="482" y="336" width="2" height="1" fill="#ffffff"/>
<rect x="485" y="336" width="2" height="1" fill="#ffffff"/>
<rect x="480" y="338" width="2" height="1" fill="#ffffff"/>
<rect x="483" y="338" width="2" height="1" fill="#ffffff"/>
<rect x="486" y="338" width="2" height="1" fill="#ffffff"/>
<rect x="479" y="340" width="2" height="1" fill="#ffffff"/>
<rect x="482" y="340" width="2" height="1" fill="#ffffff"/>
<rect x="485" y="340" width="2" height="1" fill="#ffffff"/>
<rect x="480" y="342" width="2" height="1" fill="#ffffff"/>
<rect x="483" y="342" width="2" height="1" fill="#ffffff"/>
<rect x="486" y="342" width="2" height="1" fill="#ffffff"/>
<rect x="479" y="344" width="2" height="1" fill="#ffffff"/>
<rect x="482" y="344" width="2" height="1" fill="#ffffff"/>
<rect x="485" y="344" width="2" height="1" fill="#ffffff"/>
<rect x="480" y="346" width="2" height="1" fill="#ffffff"/>
<rect x="483" y="346" width="2" height="1" fill="#ffffff"/>
<rect x="486" y="346" width="2" height="1" fill="#ffffff"/>
<rect x="479" y="348" width="2" height="1" fill="#ffffff"/>
<rect x="482" y="348" width="2" height="1" fill="#ffffff"/>
<rect x="485" y="348" width="2" height="1" fill="#ffffff"/>
<rect x="477" y="336" width="2" height="5" fill="#ffffff"/>
<line x1="478.5" y1="335" x2="478.5" y2="351" stroke="#00ffff" stroke-width="1"/>
<line x1="479" y1="342.5" x2="487" y2="342.5" stroke="#00ffff" stroke-width="1"/>
</g>
<g shape-rendering="crispEdges">
<line x1="424" y1="308.5" x2="439.5" y2="308.5" stroke="#00ff00" stroke-width="1"/>
<line x1="439.5" y1="307.5" x2="457" y2="307.5" stroke="#00ff00" stroke-width="1"/>
<line x1="432" y1="309.5" x2="447.5" y2="309.5" stroke="#00ffff" stroke-width="1"/>
<line x1="447.5" y1="308.5" x2="456" y2="308.5" stroke="#00ffff" stroke-width="1"/>
<line x1="425" y1="310.5" x2="439.5" y2="310.5" stroke="#ff0000" stroke-width="1"/>
<line x1="439.5" y1="310.5" x2="456" y2="309.5" stroke="#ff0000" stroke-width="1"/>
<line x1="440.5" y1="311.5" x2="451" y2="311.5" stroke="#00ffff" stroke-width="1"/>
<line x1="430" y1="312.5" x2="439.5" y2="312.5" stroke="#00ffff" stroke-width="1"/>
<line x1="425" y1="313.5" x2="430" y2="313.5" stroke="#00ffff" stroke-width="1"/>
<line x1="422.5" y1="308" x2="422.5" y2="314" stroke="#00ff00" stroke-width="1"/>
<line x1="457.5" y1="307" x2="457.5" y2="312" stroke="#00ff00" stroke-width="1"/>
<rect x="424" y="308" width="1" height="1" fill="#ffffff"/>
<rect x="439.5" y="307" width="1.0" height="3" fill="#ffffff"/>
<rect x="456" y="307" width="1" height="4" fill="#ffffff"/>
<rect x="424" y="313" width="1" height="1" fill="#ffffff"/>
<rect x="439.5" y="312" width="1.0" height="1" fill="#ffffff"/>
</g>
<g shape-rendering="crispEdges">
<line x1="430.5" y1="323.5" x2="447.5" y2="323.5" stroke="#00ff00" stroke-width="1"/>
<line x1="447.5" y1="322.5" x2="456" y2="322.5" stroke="#00ff00" stroke-width="1"/>
<line x1="424" y1="324.5" x2="430.5" y2="324.5" stroke="#00ff00" stroke-width="1"/>
<line x1="424" y1="325.5" x2="439.5" y2="325.5" stroke="#00ffff" stroke-width="1"/>
<line x1="439.5" y1="325.5" x2="455" y2="324.5" stroke="#00ffff" stroke-width="1"/>
<line x1="449.5" y1="327.5" x2="456" y2="326.5" stroke="#00ffff" stroke-width="1"/>
<line x1="439.5" y1="328.5" x2="449.5" y2="328.5" stroke="#00ffff" stroke-width="1"/>
<line x1="430" y1="329.5" x2="439.5" y2="329.5" stroke="#00ffff" stroke-width="1"/>
<line x1="449.5" y1="328.5" x2="455" y2="327.5" stroke="#00ff00" stroke-width="1"/>
<line x1="439.5" y1="329.5" x2="449.5" y2="329.5" stroke="#00ff00" stroke-width="1"/>
<line x1="424" y1="330.5" x2="430" y2="330.5" stroke="#00ff00" stroke-width="1"/>
<line x1="423.5" y1="324" x2="423.5" y2="330" stroke="#ffffff" stroke-width="1"/>
<line x1="457.5" y1="323" x2="457.5" y2="328" stroke="#00ff00" stroke-width="1"/>
<rect x="455" y="323" width="2" height="2" fill="#ffffff"/>
<rect x="439.5" y="329" width="1.0" height="2" fill="#ffffff"/>
</g>
<g shape-rendering="crispEdges">
<rect x="436" y="319" width="6" height="1" fill="#ffff00"/>
<rect x="424" y="332" width="23" height="9" fill="#ffffff"/>
<rect x="463" y="308" width="1" height="1" fill="#00ff00"/>
<rect x="463" y="311" width="1" height="1" fill="#ffffff"/>
<rect x="463" y="314" width="1" height="1" fill="#00ff00"/>
<rect x="463" y="317" width="1" height="1" fill="#ffffff"/>
<rect x="463" y="320" width="1" height="1" fill="#00ff00"/>
<rect x="463" y="323" width="1" height="1" fill="#ffffff"/>
<rect x="463" y="326" width="1" height="1" fill="#00ff00"/>
<rect x="463" y="329" width="1" height="1" fill="#ffffff"/>
<rect x="463" y="332" width="1" height="1" fill="#00ff00"/>
<rect x="462" y="314" width="2" height="2" fill="#00ff00"/>
<rect x="462" y="324" width="2" height="2" fill="#00ff00"/>
</g>
<g shape-rendering="crispEdges">
<rect x="551.5" y="292.5" width="174.0" height="62.0" fill="none" stroke="#00ff00" stroke-width="1"/>
<line x1="638.5" y1="293" x2="638.5" y2="353" stroke="#00ff00" stroke-width="1"/>
</g>
<g shape-rendering="crispEdges">
<rect x="552.5" y="294.5" width="85.0" height="57.0" fill="none" stroke="#00ffff" stroke-width="1"/>
</g>
<g shape-rendering="crispEdges">
<line x1="627.5" y1="295" x2="627.5" y2="351" stroke="#00ffff" stroke-width="1"/>
<line x1="636.5" y1="295" x2="636.5" y2="351" stroke="#00ffff" stroke-width="1"/>
<rect x="628" y="296" width="8" height="5" fill="#00ff00"/>
<rect x="629" y="296" width="1" height="1" fill="#ffffff"/>
<rect x="632" y="296" width="1" height="1" fill="#ffffff"/>
<rect x="634" y="296" width="1" height="1" fill="#ffffff"/>
<rect x="628" y="298" width="1" height="1" fill="#ffffff"/>
<rect x="630" y="298" width="1" height="1" fill="#ffffff"/>
<rect x="633" y="298" width="1" height="1" fill="#ffffff"/>
<rect x="629" y="300" width="1" height="1" fill="#ffffff"/>
<rect x="631" y="300" width="1" height="1" fill="#ffffff"/>
<rect x="634" y="300" width="1" height="1" fill="#ffffff"/>
<line x1="627" y1="302.5" x2="636" y2="302.5" stroke="#00ffff" stroke-width="1"/>
<line x1="627" y1="305.5" x2="636" y2="305.5" stroke="#00ffff" stroke-width="1"/>
<line x1="627" y1="309.5" x2="636" y2="309.5" stroke="#00ffff" stroke-width="1"/>
<line x1="627" y1="316.5" x2="636" y2="316.5" stroke="#00ffff" stroke-width="1"/>
<line x1="627" y1="321.5" x2="636" y2="321.5" stroke="#00ffff" stroke-width="1"/>
<line x1="627" y1="325.5" x2="636" y2="325.5" stroke="#00ffff" stroke-width="1"/>
<line x1="627" y1="331.5" x2="636" y2="331.5" stroke="#00ffff" stroke-width="1"/>
<line x1="628" y1="316.5" x2="636" y2="316.5" stroke="#00ff00" stroke-width="1"/>
<line x1="628" y1="321.5" x2="636" y2="321.5" stroke="#00ff00" stroke-width="1"/>
<line x1="628" y1="332.5" x2="636" y2="332.5" stroke="#00ff00" stroke-width="1"/>
<rect x="628" y="308" width="3" height="1" fill="#ffffff"/>
<rect x="628" y="311" width="3" height="1" fill="#ffffff"/>
<rect x="628" y="321" width="2" height="1" fill="#ffffff"/>
<rect x="628" y="336" width="8" height="14" fill="#00ff00"/>
<rect x="628" y="337" width="2" height="1" fill="#ffffff"/>
<rect x="631" y="337" width="2" height="1" fill="#ffffff"/>
<rect x="634" y="337" width="2" height="1" fill="#ffffff"/>
<rect x="629" y="339" width="2" height="1" fill="#ffffff"/>
<rect x="632" y="339" width="2" height="1" fill="#ffffff"/>
<rect x="635" y="339" width="2" height="1" fill="#ffffff"/>
<rect x="628" y="341" width="2" height="1" fill="#ffffff"/>
<rect x="631" y="341" width="2" height="1" fill="#ffffff"/>
<rect x="634" y="341" width="2" height="1" fill="#ffffff"/>
<rect x="629" y="343" width="2" height="1" fill="#ffffff"/>
<rect x="632" y="343" width="2" height="1" fill="#ffffff"/>
<rect x="635" y="343" width="2" height="1" fill="#ffffff"/>
<rect x="628" y="345" width="2" height="1" fill="#ffffff"/>
<rect x="631" y="345" width="2" height="1" fill="#ffffff"/>
<rect x="634" y="345" width="2" height="1" fill="#ffffff"/>
<rect x="629" y="347" width="2" height="1" fill="#ffffff"/>
<rect x="632" y="347" width="2" height="1" fill="#ffffff"/>
<rect x="635" y="347" width="2" height="1" fill="#ffffff"/>
<rect x="628" y="349" width="2" height="1" fill="#ffffff"/>
<rect x="631" y="349" width="2" height="1" fill="#ffffff"/>
<rect x="634" y="349" width="2" height="1" fill="#ffffff"/>
<rect x="626" y="337" width="2" height="5" fill="#ffffff"/>
<line x1="627.5" y1="336" x2="627.5" y2="351" stroke="#00ffff" stroke-width="1"/>
<line x1="628" y1="342.5" x2="636" y2="342.5" stroke="#00ffff" stroke-width="1"/>
</g>
<g shape-rendering="crispEdges">
<line x1="568" y1="308.5" x2="579.5" y2="308.5" stroke="#00ff00" stroke-width="1"/>
<line x1="579.5" y1="307.5" x2="593" y2="307.5" stroke="#00ff00" stroke-width="1"/>
<line x1="576" y1="309.5" x2="587.5" y2="309.5" stroke="#00ffff" stroke-width="1"/>
<line x1="587.5" y1="308.5" x2="592" y2="308.5" stroke="#00ffff" stroke-width="1"/>
<line x1="569" y1="310.5" x2="579.5" y2="310.5" stroke="#ff0000" stroke-width="1"/>
<line x1="579.5" y1="310.5" x2="592" y2="309.5" stroke="#ff0000" stroke-width="1"/>
<line x1="580.5" y1="311.5" x2="587" y2="311.5" stroke="#00ffff" stroke-width="1"/>
<line x1="574" y1="312.5" x2="579.5" y2="312.5" stroke="#00ffff" stroke-width="1"/>
<line x1="569" y1="313.5" x2="574" y2="313.5" stroke="#00ffff" stroke-width="1"/>
<line x1="566.5" y1="308" x2="566.5" y2="314" stroke="#00ff00" stroke-width="1"/>
<line x1="593.5" y1="307" x2="593.5" y2="312" stroke="#00ff00" stroke-width="1"/>
<rect x="568" y="308" width="1" height="1" fill="#ffffff"/>
<rect x="579.5" y="307" width="1.0" height="3" fill="#ffffff"/>
<rect x="592" y="307" width="1" height="4" fill="#ffffff"/>
<rect x="568" y="313" width="1" height="1" fill="#ffffff"/>
<rect x="579.5" y="312" width="1.0" height="1" fill="#ffffff"/>
</g>
<g shape-rendering="crispEdges">
<line x1="570.5" y1="323.5" x2="587.5" y2="323.5" stroke="#00ff00" stroke-width="1"/>
<line x1="587.5" y1="322.5" x2="592" y2="322.5" stroke="#00ff00" stroke-width="1"/>
<line x1="568" y1="324.5" x2="570.5" y2="324.5" stroke="#00ff00" stroke-width="1"/>
<line x1="568" y1="325.5" x2="579.5" y2="325.5" stroke="#00ffff" stroke-width="1"/>
<line x1="579.5" y1="325.5" x2="591" y2="324.5" stroke="#00ffff" stroke-width="1"/>
<line x1="589.5" y1="327.5" x2="592" y2="326.5" stroke="#00ffff" stroke-width="1"/>
<line x1="579.5" y1="328.5" x2="589.5" y2="328.5" stroke="#00ffff" stroke-width="1"/>
<line x1="574" y1="329.5" x2="579.5" y2="329.5" stroke="#00ffff" stroke-width="1"/>
<line x1="589.5" y1="328.5" x2="591" y2="327.5" stroke="#00ff00" stroke-width="1"/>
<line x1="579.5" y1="329.5" x2="589.5" y2="329.5" stroke="#00ff00" stroke-width="1"/>
<line x1="568" y1="330.5" x2="574" y2="330.5" stroke="#00ff00" stroke-width="1"/>
<line x1="567.5" y1="324" x2="567.5" y2="330" stroke="#ffffff" stroke-width="1"/>
<line x1="593.5" y1="323" x2="593.5" y2="328" stroke="#00ff00" stroke-width="1"/>
<rect x="591" y="323" width="2" height="2" fill="#ffffff"/>
<rect x="579.5" y="329" width="1.0" height="2" fill="#ffffff"/>
</g>
<g shape-rendering="crispEdges">
<rect x="577" y="318" width="6" height="1" fill="#ffff00"/>
<rect x="567" y="332" width="23" height="9" fill="#ffffff"/>
<rect x="599" y="308" width="1" height="1" fill="#00ff00"/>
<rect x="599" y="311" width="1" height="1" fill="#ffffff"/>
<rect x="599" y="314" width="1" height="1" fill="#00ff00"/>
<rect x="599" y="317" width="1" height="1" fill="#ffffff"/>
<rect x="599" y="320" width="1" height="1" fill="#00ff00"/>
<rect x="599" y="323" width="1" height="1" fill="#ffffff"/>
<rect x="599" y="326" width="1" height="1" fill="#00ff00"/>
<rect x="599" y="329" width="1" height="1" fill="#ffffff"/>
<rect x="599" y="332" width="1" height="1" fill="#00ff00"/>
<rect x="598" y="314" width="2" height="2" fill="#00ff00"/>
<rect x="598" y="324" width="2" height="2" fill="#00ff00"/>
</g>
<g shape-rendering="crispEdges">
<rect x="639.5" y="294.5" width="85.0" height="57.0" fill="none" stroke="#00ffff" stroke-width="1"/>
</g>
<g shape-rendering="crispEdges">
<line x1="714.5" y1="295" x2="714.5" y2="351" stroke="#00ffff" stroke-width="1"/>
<line x1="723.5" y1="295" x2="723.5" y2="351" stroke="#00ffff" stroke-width="1"/>
<rect x="715" y="296" width="8" height="5" fill="#00ff00"/>
<rect x="716" y="296" width="1" height="1" fill="#ffffff"/>
<rect x="719" y="296" width="1" height="1" fill="#ffffff"/>
<rect x="721" y="296" width="1" height="1" fill="#ffffff"/>
<rect x="715" y="298" width="1" height="1" fill="#ffffff"/>
<rect x="717" y="298" width="1" height="1" fill="#ffffff"/>
<rect x="720" y="298" width="1" height="1" fill="#ffffff"/>
<rect x="716" y="300" width="1" height="1" fill="#ffffff"/>
<rect x="718" y="300" width="1" height="1" fill="#ffffff"/>
<rect x="721" y="300" width="1" height="1" fill="#ffffff"/>
<line x1="714" y1="302.5" x2="723" y2="302.5" stroke="#00ffff" stroke-width="1"/>
<line x1="714" y1="305.5" x2="723" y2="305.5" stroke="#00ffff" stroke-width="1"/>
<line x1="714" y1="309.5" x2="723" y2="309.5" stroke="#00ffff" stroke-width="1"/>
<line x1="714" y1="316.5" x2="723" y2="316.5" stroke="#00ffff" stroke-width="1"/>
<line x1="714" y1="321.5" x2="723" y2="321.5" stroke="#00ffff" stroke-width="1"/>
<line x1="714" y1="325.5" x2="723" y2="325.5" stroke="#00ffff" stroke-width="1"/>
<line x1="714" y1="331.5" x2="723" y2="331.5" stroke="#00ffff" stroke-width="1"/>
<line x1="715" y1="316.5" x2="723" y2="316.5" stroke="#00ff00" stroke-width="1"/>
<line x1="715" y1="321.5" x2="723" y2="321.5" stroke="#00ff00" stroke-width="1"/>
<line x1="715" y1="332.5" x2="723" y2="332.5" stroke="#00ff00" stroke-width="1"/>
<rect x="715" y="308" width="3" height="1" fill="#ffffff"/>
<rect x="715" y="311" width="3" height="1" fill="#ffffff"/>
<rect x="715" y="321" width="2" height="1" fill="#ffffff"/>
<rect x="715" y="336" width="8" height="14" fill="#00ff00"/>
<rect x="715" y="337" width="2" height="1" fill="#ffffff"/>
<rect x="718" y="337" width="2" height="1" fill="#ffffff"/>
<rect x="721" y="337" width="2" height="1" fill="#ffffff"/>
<rect x="716" y="339" width="2" height="1" fill="#ffffff"/>
<rect x="719" y="339" width="2" height="1" fill="#ffffff"/>
<rect x="722" y="339" width="2" height="1" fill="#ffffff"/>
<rect x="715" y="341" width="2" height="1" fill="#ffffff"/>
<rect x="718" y="341" width="2" height="1" fill="#ffffff"/>
<rect x="721" y="341" width="2" height="1" fill="#ffffff"/>
<rect x="716" y="343" width="2" height="1" fill="#ffffff"/>
<rect x="719" y="343" width="2" height="1" fill="#ffffff"/>
<rect x="722" y="343" width="2" height="1" fill="#ffffff"/>
<rect x="715" y="345" width="2" height="1" fill="#ffffff"/>
<rect x="718" y="345" width="2" height="1" fill="#ffffff"/>
<rect x="721" y="345" width="2" height="1" fill="#ffffff"/>
<rect x="716" y="347" width="2" height="1" fill="#ffffff"/>
<rect x="719" y="347" width="2" height="1" fill="#ffffff"/>
<rect x="722" y="347" width="2" height="1" fill="#ffffff"/>
<rect x="715" y="349" width="2" height="1" fill="#ffffff"/>
<rect x="718" y="349" width="2" height="1" fill="#ffffff"/>
<rect x="721" y="349" width="2" height="1" fill="#ffffff"/>
<rect x="713" y="337" width="2" height="5" fill="#ffffff"/>
<line x1="714.5" y1="336" x2="714.5" y2="351" stroke="#00ffff" stroke-width="1"/>
<line x1="715" y1="342.5" x2="723" y2="342.5" stroke="#00ffff" stroke-width="1"/>
</g>
<g shape-rendering="crispEdges">
<line x1="663" y1="310.5" x2="675.0" y2="310.5" stroke="#00ff00" stroke-width="1"/>
<line x1="675.0" y1="309.5" x2="689" y2="309.5" stroke="#00ff00" stroke-width="1"/>
<line x1="671" y1="311.5" x2="683.0" y2="311.5" stroke="#00ffff" stroke-width="1"/>
<line x1="683.0" y1="310.5" x2="688" y2="310.5" stroke="#00ffff" stroke-width="1"/>
<line x1="664" y1="312.5" x2="675.0" y2="312.5" stroke="#ff0000" stroke-width="1"/>
<line x1="675.0" y1="312.5" x2="688" y2="311.5" stroke="#ff0000" stroke-width="1"/>
<line x1="676.0" y1="313.5" x2="683" y2="313.5" stroke="#00ffff" stroke-width="1"/>
<line x1="669" y1="314.5" x2="675.0" y2="314.5" stroke="#00ffff" stroke-width="1"/>
<line x1="664" y1="315.5" x2="669" y2="315.5" stroke="#00ffff" stroke-width="1"/>
<line x1="661.5" y1="310" x2="661.5" y2="316" stroke="#00ff00" stroke-width="1"/>
<line x1="689.5" y1="309" x2="689.5" y2="314" stroke="#00ff00" stroke-width="1"/>
<rect x="663" y="310" width="1" height="1" fill="#ffffff"/>
<rect x="675.0" y="309" width="1.0" height="3" fill="#ffffff"/>
<rect x="688" y="309" width="1" height="4" fill="#ffffff"/>
<rect x="663" y="315" width="1" height="1" fill="#ffffff"/>
<rect x="675.0" y="314" width="1.0" height="1" fill="#ffffff"/>
</g>
<g shape-rendering="crispEdges">
<line x1="666.0" y1="325.5" x2="683.0" y2="325.5" stroke="#00ff00" stroke-width="1"/>
<line x1="683.0" y1="324.5" x2="688" y2="324.5" stroke="#00ff00" stroke-width="1"/>
<line x1="663" y1="326.5" x2="666.0" y2="326.5" stroke="#00ff00" stroke-width="1"/>
<line x1="663" y1="327.5" x2="675.0" y2="327.5" stroke="#00ffff" stroke-width="1"/>
<line x1="675.0" y1="327.5" x2="687" y2="326.5" stroke="#00ffff" stroke-width="1"/>
<line x1="685.0" y1="329.5" x2="688" y2="328.5" stroke="#00ffff" stroke-width="1"/>
<line x1="675.0" y1="330.5" x2="685.0" y2="330.5" stroke="#00ffff" stroke-width="1"/>
<line x1="669" y1="331.5" x2="675.0" y2="331.5" stroke="#00ffff" stroke-width="1"/>
<line x1="685.0" y1="330.5" x2="687" y2="329.5" stroke="#00ff00" stroke-width="1"/>
<line x1="675.0" y1="331.5" x2="685.0" y2="331.5" stroke="#00ff00" stroke-width="1"/>
<line x1="663" y1="332.5" x2="669" y2="332.5" stroke="#00ff00" stroke-width="1"/>
<line x1="662.5" y1="326" x2="662.5" y2="332" stroke="#ffffff" stroke-width="1"/>
<line x1="689.5" y1="325" x2="689.5" y2="330" stroke="#00ff00" stroke-width="1"/>
<rect x="687" y="325" width="2" height="2" fill="#ffffff"/>
<rect x="675.0" y="331" width="1.0" height="2" fill="#ffffff"/>
</g>
<g shape-rendering="crispEdges">
<rect x="673" y="320" width="6" height="1" fill="#ffff00"/>
<rect x="663" y="334" width="23" height="9" fill="#ffffff"/>
<rect x="695" y="310" width="1" height="1" fill="#00ff00"/>
<rect x="695" y="313" width="1" height="1" fill="#ffffff"/>
<rect x="695" y="316" width="1" height="1" fill="#00ff00"/>
<rect x="695" y="319" width="1" height="1" fill="#ffffff"/>
<rect x="695" y="322" width="1" height="1" fill="#00ff00"/>
<rect x="695" y="325" width="1" height="1" fill="#ffffff"/>
<rect x="695" y="328" width="1" height="1" fill="#00ff00"/>
<rect x="695" y="331" width="1" height="1" fill="#ffffff"/>
<rect x="695" y="334" width="1" height="1" fill="#00ff00"/>
<rect x="694" y="316" width="2" height="2" fill="#00ff00"/>
<rect x="694" y="326" width="2" height="2" fill="#00ff00"/>
</g>
<text x="318" y="288" fill="#fff" font-size="5" font-family="Liberation Sans">C4</text>
<text x="405" y="288" fill="#fff" font-size="5" font-family="Liberation Sans">C4</text>
<text x="555" y="289" fill="#fff" font-size="5" font-family="Liberation Sans">C4</text>
<text x="641" y="289" fill="#fff" font-size="5" font-family="Liberation Sans">C4</text>
<path d="M273 287.5 H296 M273 292.5 H296 M286 282.5 L302 290 L286 297.5 M296 287.5 L300 290 L296 292.5" stroke="#fff" stroke-width="1" fill="none"/>
<path d="M508 287.5 H531 M508 292.5 H531 M521 282.5 L537 290 L521 297.5 M531 287.5 L535 290 L531 292.5" stroke="#fff" stroke-width="1" fill="none"/>
<path d="M745 287.5 H768 M745 292.5 H768 M758 282.5 L774 290 L758 297.5 M768 287.5 L772 290 L768 292.5" stroke="#fff" stroke-width="1" fill="none"/>
<text x="160" y="392.5" fill="#a4a4a4" font-size="7" font-weight="bold" textLength="13" lengthAdjust="spacingAndGlyphs" font-family="Liberation Sans">轮立</text>
<text x="136" y="401" fill="#a4a4a4" font-size="7" font-weight="bold" textLength="67" lengthAdjust="spacingAndGlyphs" font-family="Liberation Sans">钢架详图，柱脚图，节点</text>
<text x="395" y="392.5" fill="#a4a4a4" font-size="7" font-weight="bold" textLength="14" lengthAdjust="spacingAndGlyphs" font-family="Liberation Sans">钢架详</text>
<text x="372" y="401" fill="#a4a4a4" font-size="7" font-weight="bold" textLength="68" lengthAdjust="spacingAndGlyphs" font-family="Liberation Sans">钢架详图，柱脚图，节点</text>
<text x="632" y="392.5" fill="#a4a4a4" font-size="7" font-weight="bold" textLength="15" lengthAdjust="spacingAndGlyphs" font-family="Liberation Sans">钢立柱</text>
<text x="618" y="401" fill="#a4a4a4" font-size="7" font-weight="bold" textLength="44" lengthAdjust="spacingAndGlyphs" font-family="Liberation Sans">柱脚详图 节点</text>
<text x="146" y="504" fill="#a4a4a4" font-size="7" font-weight="bold" textLength="36" lengthAdjust="spacingAndGlyphs" font-family="Liberation Sans">柱脚节点详图</text>
<text x="381" y="504" fill="#a4a4a4" font-size="7" font-weight="bold" textLength="37" lengthAdjust="spacingAndGlyphs" font-family="Liberation Sans">柱脚节点详图</text>
<text x="617" y="504" fill="#a4a4a4" font-size="7" font-weight="bold" textLength="37" lengthAdjust="spacingAndGlyphs" font-family="Liberation Sans">柱脚节点详图</text>
<g fill="none" stroke="#fff" stroke-width="1" shape-rendering="crispEdges">
<line x1="26.5" y1="481" x2="26.5" y2="537" stroke="#ffffff" stroke-width="1"/>
<line x1="17" y1="528.5" x2="74" y2="528.5" stroke="#ffffff" stroke-width="1"/>
</g>
<path d="M22 490.5 L26.5 481.5 L30.5 490.5 M64.5 524.5 L73.5 528.5 L64.5 532.5" fill="none" stroke="#ffffff" stroke-width="1"/>
<path d="M23 468 L26.5 472.5 L30 468 M26.5 472.5 V476.5" fill="none" stroke="#ffffff" stroke-width="1"/>
<path d="M79 525 L86 532 M86 525 L79 532" fill="none" stroke="#ffffff" stroke-width="1"/>
<text x="443" y="142" fill="#00ff00" stroke="#00ff00" stroke-width="0.35" font-size="7.5" font-weight="bold" textLength="151" lengthAdjust="spacingAndGlyphs" font-family="Liberation Sans">以下 钢架详图实例，本例作展示参考，具体以实际为准</text>
<text x="443" y="151.5" fill="#00ff00" stroke="#00ff00" stroke-width="0.35" font-size="7.5" font-weight="bold" textLength="128" lengthAdjust="spacingAndGlyphs" font-family="Liberation Sans">本图为演示用途请勿用于工程，如有疑问请联系</text>
<g fill="none" stroke="#ff0000" stroke-width="1.25">
<path d="M402.2 158.5 Q409 163 411.4 170.8"/>
<path d="M393.4 185.3 Q400 189 403.6 195.6"/>
<path d="M393 230.1 L401.8 237 L414.5 186.2"/>
<path d="M416.2 174.7 L455.8 170.2 L470.5 168.3 L465 167.5"/>
<path d="M454.9 171.2 L455.8 218 L454.9 245.3 L441.2 233.6"/>
<path d="M424.6 185.3 L426 218"/>
<path d="M426 191.1 L444.1 189.7"/>
<path d="M444.1 186.8 L441.8 207.3"/>
<path d="M427.5 209.3 L445.1 207.3"/>
<path d="M494 182.4 L563.6 176.6"/>
<path d="M532.9 155.6 L505.6 207.3"/>
<path d="M505.6 207.3 L560 201.4"/>
<path d="M533.5 185.8 L533.5 247.3 L520.2 235.6"/>
<path d="M518.3 214.1 L491.9 240.5"/>
<path d="M546.6 216 L566 236.8"/>
<path d="M587.2 182.5 L621.5 179.4"/>
<path d="M610.8 155.3 L593.1 204.9 L619.1 200.9"/>
<path d="M610.4 188.4 L610.8 268.7"/>
<path d="M584.9 225 L625 215"/>
<path d="M639.8 156 Q637 175 630.3 189 Q626 197 623.4 202.8"/>
<path d="M631.2 188.1 L658.9 184.6 L657.5 182 L661.5 185.5 L651.1 196.8"/>
<path d="M639.5 195 L639 207.1 Q636 222 632.9 226.2 Q626 238 612.1 247.8"/>
<path d="M639 207.1 Q646 225 652 238.3 Q656 242 666.7 243.5"/>
<path d="M709.5 157.7 L681.2 200.2"/>
<path d="M700.6 175.4 L700.1 247.4"/>
<path d="M722.5 168.3 L711.2 202.6"/>
<path d="M721.8 189.6 L757.2 182"/>
<path d="M708.8 214.4 L763.1 204.2"/>
<path d="M737.2 155.3 L738.3 248.6"/>
</g>
<g shape-rendering="crispEdges">
<line x1="744.5" y1="174" x2="744.5" y2="256" stroke="#ffffff" stroke-width="1"/>
<line x1="703" y1="215.5" x2="785" y2="215.5" stroke="#ffffff" stroke-width="1"/>
</g>
</svg>
<!-- right panel -->
<div class="a" style="left:822px;top:80px;width:1px;height:473px;background:#404040"></div>
<div class="a" style="left:823px;top:80px;width:1px;height:473px;background:#fff"></div>
<div class="a" style="left:826px;top:81px;width:1px;height:471px;background:#fff"></div>
<div class="a" style="left:823px;top:80px;width:150px;height:1px;background:#a0a0a0"></div>
<div class="a" style="left:824px;top:81px;width:149px;height:1px;background:#fff"></div>
<div class="a" style="left:827px;top:82px;width:1px;height:469px;background:#696969"></div>
<div class="a" style="left:828px;top:82px;width:1px;height:469px;background:#fff"></div>
<!-- grip line -->
<div class="a" style="left:836px;top:91px;width:95px;height:1px;background:#fff"></div>
<div class="a" style="left:836px;top:92px;width:95px;height:1px;background:#a0a0a0"></div>
<div class="a" style="left:930px;top:91px;width:1px;height:2px;background:#a0a0a0"></div>
<!-- small buttons -->
<div class="a btn" style="left:937px;top:85px"><svg width="13" height="13" style="position:absolute;left:-1px;top:-1px"><path d="M3 7.5 L6.5 3.5 L10 7.5 Z" fill="#000"/></svg></div>
<div class="a btn" style="left:953px;top:85px"><svg width="13" height="13" style="position:absolute;left:-1px;top:-1px"><path d="M3.5 3.5 L9.5 9.5 M9.5 3.5 L3.5 9.5" stroke="#000" stroke-width="1.8"/></svg></div>
<!-- listbox -->
<div class="a" style="left:833px;top:103px;width:132px;height:421px;border:1px solid #fff;border-top-color:#e3e3e3;border-left-color:#e3e3e3"></div>
<div class="a" style="left:836px;top:106px;width:128px;height:414px;border-top:2px solid #696969;border-left:2px solid #696969;border-right:1px solid #fff;border-bottom:1px solid #fff"></div>
<div class="a" style="left:838px;top:108px;width:108px;height:395px;background:#f0f0f0"></div>
<!-- vscroll -->
<div class="a" style="left:945px;top:108px;width:1px;height:395px;background:#fff"></div>
<div class="a" style="left:946px;top:278px;width:15px;height:207px;background:#cdcdcd"></div>
<svg class="a" style="left:946px;top:108px" width="17" height="17"><path d="M4 11 L8 7 L12 11" stroke="#606060" stroke-width="2" fill="none"/></svg>
<svg class="a" style="left:946px;top:486px" width="17" height="17"><path d="M4 6 L8 10 L12 6" stroke="#606060" stroke-width="2" fill="none"/></svg>
<!-- hscroll -->
<div class="a" style="left:838px;top:503px;width:108px;height:15px;background:#f0f0f0"></div>
<div class="a" style="left:872px;top:503px;width:56px;height:15px;background:#cdcdcd"></div>
<svg class="a" style="left:838px;top:503px" width="16" height="15"><path d="M10 3.5 L6.5 7.5 L10 11.5" stroke="#606060" stroke-width="2" fill="none"/></svg>
<svg class="a" style="left:929px;top:503px" width="16" height="15"><path d="M6 3.5 L9.5 7.5 L6 11.5" stroke="#606060" stroke-width="2" fill="none"/></svg>
<div class="a dot" style="top:118px"></div><div class="a cb" style="top:114px"><svg width="9" height="9" viewBox="0 0 9 9" style="position:absolute;left:0;top:0"><path d="M0.8 4 L3.6 7 L8.4 1.2" stroke="#000" stroke-width="2.2" fill="none"/></svg></div><div class="a t li lat" style="top:113px;font-size:13.5px">3</div>
<div class="a dot" style="top:138px"></div><div class="a cb" style="top:134px"><svg width="9" height="9" viewBox="0 0 9 9" style="position:absolute;left:0;top:0"><path d="M0.8 4 L3.6 7 L8.4 1.2" stroke="#000" stroke-width="2.2" fill="none"/></svg></div><div class="a t li lat" style="top:133px;font-size:13.5px">7</div>
<div class="a dot" style="top:158px"></div><div class="a cb" style="top:154px"><svg width="9" height="9" viewBox="0 0 9 9" style="position:absolute;left:0;top:0"><path d="M0.8 4 L3.6 7 L8.4 1.2" stroke="#000" stroke-width="2.2" fill="none"/></svg></div><div class="a t li lat" style="top:153px;letter-spacing:-0.75px">AXIS_TEXT</div>
<div class="a dot" style="top:178px"></div><div class="a cb" style="top:174px"><svg width="9" height="9" viewBox="0 0 9 9" style="position:absolute;left:0;top:0"><path d="M0.8 4 L3.6 7 L8.4 1.2" stroke="#000" stroke-width="2.2" fill="none"/></svg></div><div class="a t li lat" style="top:173px;letter-spacing:0.5px">Defpoints</div>
<div class="a dot" style="top:198px"></div><div class="a cb" style="top:194px"><svg width="9" height="9" viewBox="0 0 9 9" style="position:absolute;left:0;top:0"><path d="M0.8 4 L3.6 7 L8.4 1.2" stroke="#000" stroke-width="2.2" fill="none"/></svg></div><div class="a t li lat" style="top:193px;letter-spacing:1.7px">dim</div>
<div class="a dot" style="top:218px"></div><div class="a cb" style="top:214px"><svg width="9" height="9" viewBox="0 0 9 9" style="position:absolute;left:0;top:0"><path d="M0.8 4 L3.6 7 L8.4 1.2" stroke="#000" stroke-width="2.2" fill="none"/></svg></div><div class="a t li lat" style="top:213px;letter-spacing:2px">NUM</div>
<div class="a dot" style="top:238px"></div><div class="a cb" style="top:234px"><svg width="9" height="9" viewBox="0 0 9 9" style="position:absolute;left:0;top:0"><path d="M0.8 4 L3.6 7 L8.4 1.2" stroke="#000" stroke-width="2.2" fill="none"/></svg></div><div class="a t li lat" style="top:233px;letter-spacing:0.5px">xw</div>
<div class="a dot" style="top:258px"></div><div class="a cb" style="top:254px"><svg width="9" height="9" viewBox="0 0 9 9" style="position:absolute;left:0;top:0"><path d="M0.8 4 L3.6 7 L8.4 1.2" stroke="#000" stroke-width="2.2" fill="none"/></svg></div><div class="a t li" style="top:253px">编号标注</div>
<div class="a dot" style="top:278px"></div><div class="a cb" style="top:274px"><svg width="9" height="9" viewBox="0 0 9 9" style="position:absolute;left:0;top:0"><path d="M0.8 4 L3.6 7 L8.4 1.2" stroke="#000" stroke-width="2.2" fill="none"/></svg></div><div class="a t li" style="top:273px">尺寸标注</div>
<div class="a dot" style="top:298px"></div><div class="a cb" style="top:294px"><svg width="9" height="9" viewBox="0 0 9 9" style="position:absolute;left:0;top:0"><path d="M0.8 4 L3.6 7 L8.4 1.2" stroke="#000" stroke-width="2.2" fill="none"/></svg></div><div class="a t li" style="top:293px">钢板标注</div>
<div class="a dot" style="top:318px"></div><div class="a cb" style="top:314px"><svg width="9" height="9" viewBox="0 0 9 9" style="position:absolute;left:0;top:0"><path d="M0.8 4 L3.6 7 L8.4 1.2" stroke="#000" stroke-width="2.2" fill="none"/></svg></div><div class="a t li" style="top:313px">焊缝标注</div>
<div class="a dot" style="top:338px"></div><div class="a cb" style="top:334px"><svg width="9" height="9" viewBox="0 0 9 9" style="position:absolute;left:0;top:0"><path d="M0.8 4 L3.6 7 L8.4 1.2" stroke="#000" stroke-width="2.2" fill="none"/></svg></div><div class="a t li" style="top:333px">螺栓孔标注</div>
<div class="a dot" style="top:358px"></div><div class="a cb" style="top:354px"><svg width="9" height="9" viewBox="0 0 9 9" style="position:absolute;left:0;top:0"><path d="M0.8 4 L3.6 7 L8.4 1.2" stroke="#000" stroke-width="2.2" fill="none"/></svg></div><div class="a t li" style="top:353px">墙线<span style="letter-spacing:-2px">__</span><span style="margin-left:0.5px">粗线</span></div>
<div class="a dot" style="top:378px"></div><div class="a cb" style="top:374px"><svg width="9" height="9" viewBox="0 0 9 9" style="position:absolute;left:0;top:0"><path d="M0.8 4 L3.6 7 L8.4 1.2" stroke="#000" stroke-width="2.2" fill="none"/></svg></div><div class="a t li" style="top:373px">索引符号标注</div>
<div class="a dot" style="top:398px"></div><div class="a cb" style="top:394px"><svg width="9" height="9" viewBox="0 0 9 9" style="position:absolute;left:0;top:0"><path d="M0.8 4 L3.6 7 L8.4 1.2" stroke="#000" stroke-width="2.2" fill="none"/></svg></div><div class="a t li" style="top:393px">图框外框<span style="letter-spacing:-2px">__</span><span style="margin-left:0.5px">细线</span></div>
<div class="a dot" style="top:418px"></div><div class="a cb" style="top:414px"><svg width="9" height="9" viewBox="0 0 9 9" style="position:absolute;left:0;top:0"><path d="M0.8 4 L3.6 7 L8.4 1.2" stroke="#000" stroke-width="2.2" fill="none"/></svg></div><div class="a t li" style="top:413px">中文</div>
<div class="a dot" style="top:438px"></div><div class="a cb" style="top:434px"><svg width="9" height="9" viewBox="0 0 9 9" style="position:absolute;left:0;top:0"><path d="M0.8 4 L3.6 7 L8.4 1.2" stroke="#000" stroke-width="2.2" fill="none"/></svg></div><div class="a t li" style="top:433px">轴线</div>
<div class="a dot" style="top:458px"></div><div class="a cb" style="top:454px"><svg width="9" height="9" viewBox="0 0 9 9" style="position:absolute;left:0;top:0"><path d="M0.8 4 L3.6 7 L8.4 1.2" stroke="#000" stroke-width="2.2" fill="none"/></svg></div><div class="a t li" style="top:453px">柱子</div>
<div class="a dot" style="top:478px"></div><div class="a cb" style="top:474px"><svg width="9" height="9" viewBox="0 0 9 9" style="position:absolute;left:0;top:0"><path d="M0.8 4 L3.6 7 L8.4 1.2" stroke="#000" stroke-width="2.2" fill="none"/></svg></div><div class="a t li" style="top:473px">字符串标注</div>
<!-- tab -->
<div class="a" style="left:834px;top:522px;width:50px;height:25px;background:#fff;border-right:1px solid #e3e3e3;border-bottom:1px solid #e3e3e3"></div>
<div class="a t" style="left:840px;top:529px;font-size:12.5px">Layer</div>
<!-- command area -->
<div class="a" style="left:823px;top:551px;width:150px;height:1px;background:#808080"></div>
<div class="a" style="left:823px;top:552px;width:150px;height:2px;background:#fff"></div>
<div class="a" style="left:1px;top:553px;width:822px;height:1px;background:#808080"></div>
<div class="a" style="left:1px;top:554px;width:822px;height:1px;background:#e0e0e0"></div>
<div class="a" style="left:823px;top:554px;width:150px;height:1px;background:#a0a0a0"></div>
<div class="a" style="left:1px;top:555px;width:956px;height:34px;background:#e9e9e9"></div>
<div class="a" style="left:1px;top:589px;width:972px;height:2px;background:#fff"></div>
<div class="a" style="left:0;top:591px;width:974px;height:1px;background:#646464"></div>
<div class="a" style="left:1px;top:592px;width:972px;height:21px;background:#fff"></div>
<div class="a" style="left:0;top:613px;width:974px;height:1px;background:#646464"></div>
<!-- command text -->
<div class="a cmdt" style="left:3px;top:556px">请输入标注位置:</div>
<div class="a cmdt" style="left:3px;top:572px">请输入文字位置:</div>
<div class="a" style="left:958px;top:555px;width:15px;height:36px;background:#f0f0f0"></div>
<svg class="a" style="left:958px;top:555px" width="15" height="36"><path d="M4 11 L7.5 7 L11 11" stroke="#505050" stroke-width="2.2" fill="none"/><path d="M4 24 L7.5 28 L11 24" stroke="#505050" stroke-width="2.2" fill="none"/></svg>
<div class="a" style="left:957px;top:555px;width:1px;height:36px;background:#fff"></div>
<div class="a" style="left:3px;top:595px;font-size:13px;font-weight:bold;line-height:16px;color:#000">Command:</div>
<div class="a" style="left:71px;top:595px;width:2px;height:15px;background:#000"></div>
<!-- status -->
<div class="a t" style="left:3px;top:619px;letter-spacing:0.27px">X:144637.1336, Y:18383.9297</div>
<div class="a sp" style="left:726px;width:39px"></div>
<div class="a sp" style="left:767px;width:56px"></div>
<div class="a sp" style="left:825px;width:40px"></div>
<div class="a sp" style="left:868px;width:85px"></div>
<div class="a t" style="left:729px;top:618px">正交</div>
<div class="a t" style="left:769px;top:618px">对象捕捉</div>
<div class="a t" style="left:828px;top:618px">高亮</div>
<svg class="a" style="left:955px;top:618px" width="17" height="16"><path d="M4 15 L15 4 M8 15 L15 8 M12 15 L15 12" stroke="#a0a0a0" stroke-width="1.3"/><path d="M5 15 L15 5 M9 15 L15 9 M13 15 L15 13" stroke="#fff" stroke-width="0.6"/></svg>
<!-- watermark -->
<svg class="a" style="left:0;top:0" width="80" height="80" viewBox="0 0 80 80">
<path d="M7 50 Q13 55 19 56.5 L19 61.6 Q11 58 7 50 Z M29 55 Q46 51 59 39 L60 45 Q52 60 37.5 66.6 L29 66.6 Z" fill="#f08c28" opacity="0.72"/>

<ellipse cx="31.5" cy="30" rx="26.5" ry="18.5" transform="rotate(-9 31.5 30)" fill="#62a8e2" style="mix-blend-mode:multiply"/>
<path d="M37.5 27.5 L46.5 21.5 V44 L37.5 46.5 Z" fill="#fff" opacity="0.8"/>
<path d="M46.5 21.5 Q57 21 56.5 30 Q55.5 39 46.5 42" fill="none" stroke="#fff" stroke-width="2.6" opacity="0.8"/>
<path d="M6 40 Q18 28 36 23" fill="none" stroke="#fff" stroke-width="1.5" opacity="0.75"/>
<path d="M23 20 l1 2.5 l2.5 0.3 l-2 1.6 l0.7 2.5 l-2.2 -1.4 l-2.2 1.4 l0.7 -2.5 l-2 -1.6 l2.5 -0.3z" fill="#fff" opacity="0.8"/>
</svg>
<div class="a" style="left:64px;top:12px;font-family:'Liberation Serif',serif;font-weight:bold;font-size:27px;line-height:30px;color:#5eaae6;mix-blend-mode:multiply;-webkit-text-stroke:0.5px #5eaae6;letter-spacing:1px;white-space:nowrap">河东软件园</div>
<div class="a" style="left:67px;top:45px;font-family:'Liberation Serif',serif;font-weight:bold;font-size:20.5px;line-height:22px;color:#6cbc6c;mix-blend-mode:multiply;white-space:nowrap">www.pc0359.cn</div>
<!-- window border -->
<div class="a" style="left:0;top:0;width:974px;height:635px;border:1px solid #0b74d4"></div>
</body></html>
